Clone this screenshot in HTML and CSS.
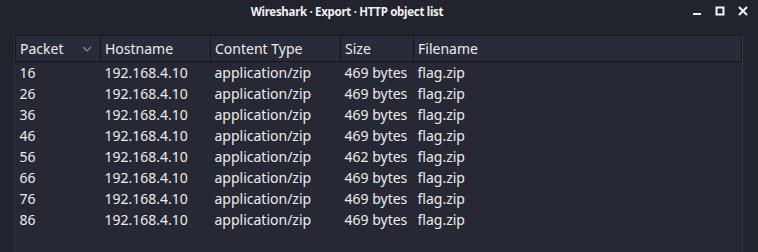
FILE: index.html
```html
<!DOCTYPE html>
<html>
  <head>
    <meta charset="utf-8" />
    <title>Wireshark · Export · HTTP object list</title>
    <link rel="stylesheet" href="styles.css">
  </head>
  <body>
    <div class="window">
      <div class="titlebar">
        <span class="title">Wireshark · Export · HTTP object list</span>
        <div class="controls">
          <svg width="10" height="10" viewBox="0 0 10 10"><rect x="1" y="7" width="8" height="2" fill="#f2f2f2"/></svg>
          <svg width="10" height="10" viewBox="0 0 10 10"><rect x="1.5" y="1.5" width="7" height="7" fill="none" stroke="#f2f2f2" stroke-width="2"/></svg>
          <svg width="10" height="10" viewBox="0 0 10 10"><path d="M1 1 L9 9 M9 1 L1 9" stroke="#f2f2f2" stroke-width="2"/></svg>
        </div>
      </div>

      <div class="view">
        <table class="objects">
          <colgroup>
            <col class="c-packet">
            <col class="c-host">
            <col class="c-type">
            <col class="c-size">
            <col>
          </colgroup>
          <thead>
            <tr>
              <th>Packet
                <svg class="sort" width="10" height="6" viewBox="0 0 10 6"><path d="M1 1 L5 5 L9 1" fill="none" stroke="#8a8d99" stroke-width="1.2"/></svg>
              </th>
              <th>Hostname</th>
              <th>Content Type</th>
              <th>Size</th>
              <th>Filename</th>
            </tr>
          </thead>
          <tbody>
            <tr><td>16</td><td>192.168.4.10</td><td>application/zip</td><td>469 bytes</td><td>flag.zip</td></tr>
            <tr><td>26</td><td>192.168.4.10</td><td>application/zip</td><td>469 bytes</td><td>flag.zip</td></tr>
            <tr><td>36</td><td>192.168.4.10</td><td>application/zip</td><td>469 bytes</td><td>flag.zip</td></tr>
            <tr><td>46</td><td>192.168.4.10</td><td>application/zip</td><td>469 bytes</td><td>flag.zip</td></tr>
            <tr><td>56</td><td>192.168.4.10</td><td>application/zip</td><td>462 bytes</td><td>flag.zip</td></tr>
            <tr><td>66</td><td>192.168.4.10</td><td>application/zip</td><td>469 bytes</td><td>flag.zip</td></tr>
            <tr><td>76</td><td>192.168.4.10</td><td>application/zip</td><td>469 bytes</td><td>flag.zip</td></tr>
            <tr><td>86</td><td>192.168.4.10</td><td>application/zip</td><td>469 bytes</td><td>flag.zip</td></tr>
          </tbody>
        </table>
      </div>
    </div>
  </body>
</html>
```

FILE: styles.css
```css
html, body {
  height: 100%;
}
body {
  margin: 0;
  background: #21232d;
  color: #ececec;
  font-family: "Noto Sans", "Open Sans", sans-serif;
  overflow: hidden;
}
.window {
  display: flex;
  flex-direction: column;
  height: 100%;
}
.titlebar {
  position: relative;
  height: 22px;
  display: flex;
  align-items: center;
  justify-content: center;
  padding-right: 64px;
}
.title {
  font-size: 11.5px;
  font-weight: bold;
  color: #f0f0f0;
  letter-spacing: -0.3px;
}
.controls {
  position: absolute;
  right: 10px;
  top: 6px;
  display: flex;
  gap: 13px;
}
.controls svg {
  display: block;
}
.view {
  flex: 1;
  margin: 13px 15px 0 14px;
  background: #262834;
  border-left: 1px solid #30333f;
  border-right: 1px solid #353848;
}
.objects {
  width: 100%;
  table-layout: fixed;
  border-collapse: collapse;
  font-size: 14px;
}
.c-packet { width: 85px; }
.c-host { width: 110px; }
.c-type { width: 130px; }
.c-size { width: 73px; }
.objects th {
  position: relative;
  height: 25px;
  padding: 0 4px;
  text-align: left;
  font-weight: normal;
  background: #282b38;
  border: 1px solid #15161c;
  border-top-color: #17181e;
}
.objects th .sort {
  position: absolute;
  right: 8px;
  top: 10px;
}
.objects td {
  height: 21px;
  padding: 0 3px 0 4px;
  white-space: nowrap;
  line-height: 21px;
}
```
